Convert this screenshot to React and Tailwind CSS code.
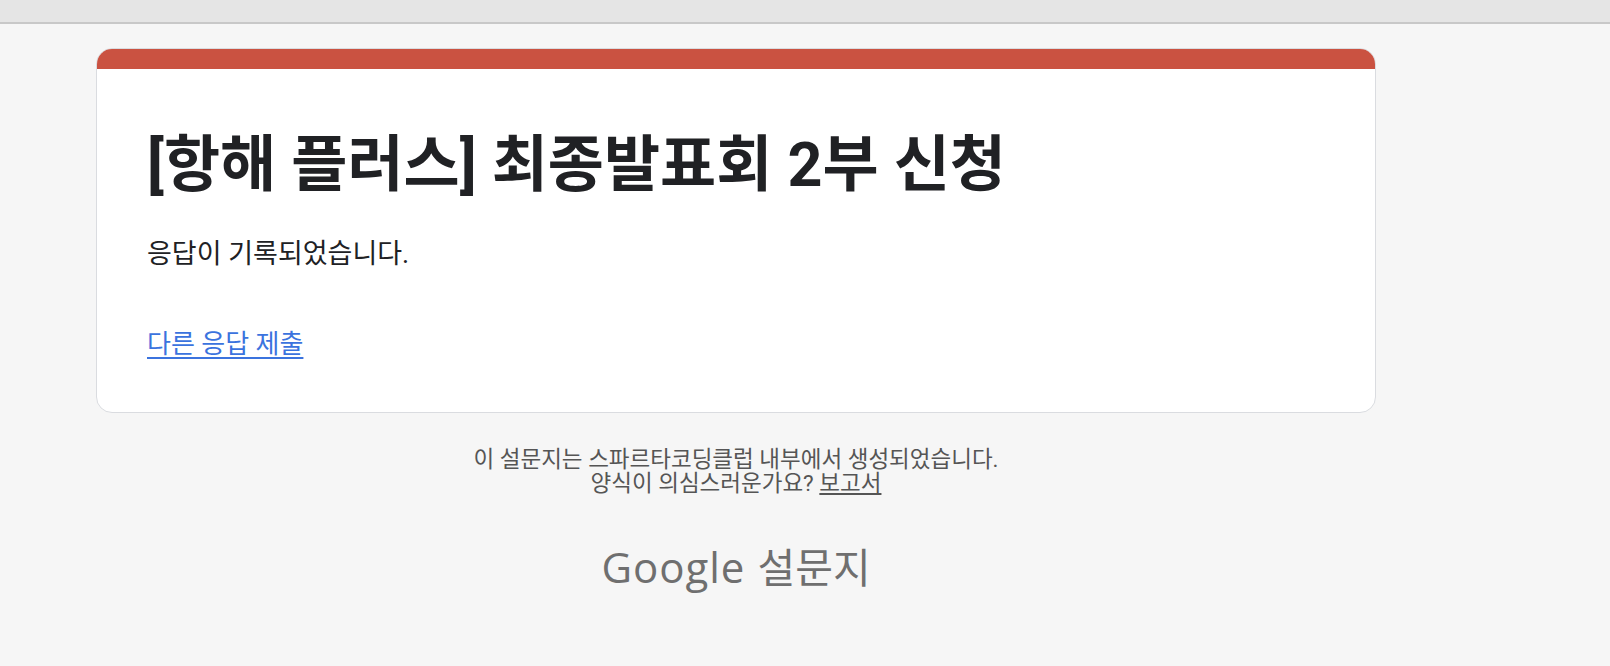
import React from "react";

const font = { fontFamily: '"Roboto", "Noto Sans CJK KR", sans-serif' };

const App = () => {
  return (
    <div className="min-h-screen bg-[#f6f6f6]" style={font}>
      <div className="h-[24px] bg-[#e5e5e5] border-b-2 border-[#c8c8c8]"></div>
      <div className="ml-[96px] w-[1280px] pt-[24px]">
        {/* Card */}
        <div className="bg-white rounded-[16px] border border-[#dadce0] overflow-hidden">
          <div className="h-[20px] bg-[#ca5241]"></div>
          <div className="px-[50px] pt-[57px] pb-[50px]">
            <h1 className="text-[61px] leading-[78px] font-bold text-[#202124]">
              [항해 플러스] 최종발표회 2부 신청
            </h1>
            <p className="mt-[32px] text-[27px] leading-[36px] text-[#202124]">
              응답이 기록되었습니다.
            </p>
            <a
              href="#"
              className="block mt-[54px] w-max text-[26px] leading-[36px] text-[#3b73de] underline underline-offset-4"
            >
              다른 응답 제출
            </a>
          </div>
        </div>

        {/* Footer */}
        <div className="mt-[34px] flex flex-col items-center text-[22.5px] leading-[24px] text-[#555555]">
          <p>이 설문지는 스파르타코딩클럽 내부에서 생성되었습니다.</p>
          <p>
            양식이 의심스러운가요?{" "}
            <a href="#" className="underline underline-offset-2">
              보고서
            </a>
          </p>
        </div>

        <div className="mt-[46px] flex items-baseline justify-center gap-[12px] text-[#6f6f6f]">
          <span className="text-[42px] leading-[48px] tracking-[1px]" style={{ fontFamily: '"Open Sans", sans-serif' }}>
            Google
          </span>
          <span className="text-[41px] leading-[48px]" style={{ fontFamily: '"Noto Sans CJK KR", sans-serif' }}>
            설문지
          </span>
        </div>
      </div>
    </div>
  );
};

export default App;
